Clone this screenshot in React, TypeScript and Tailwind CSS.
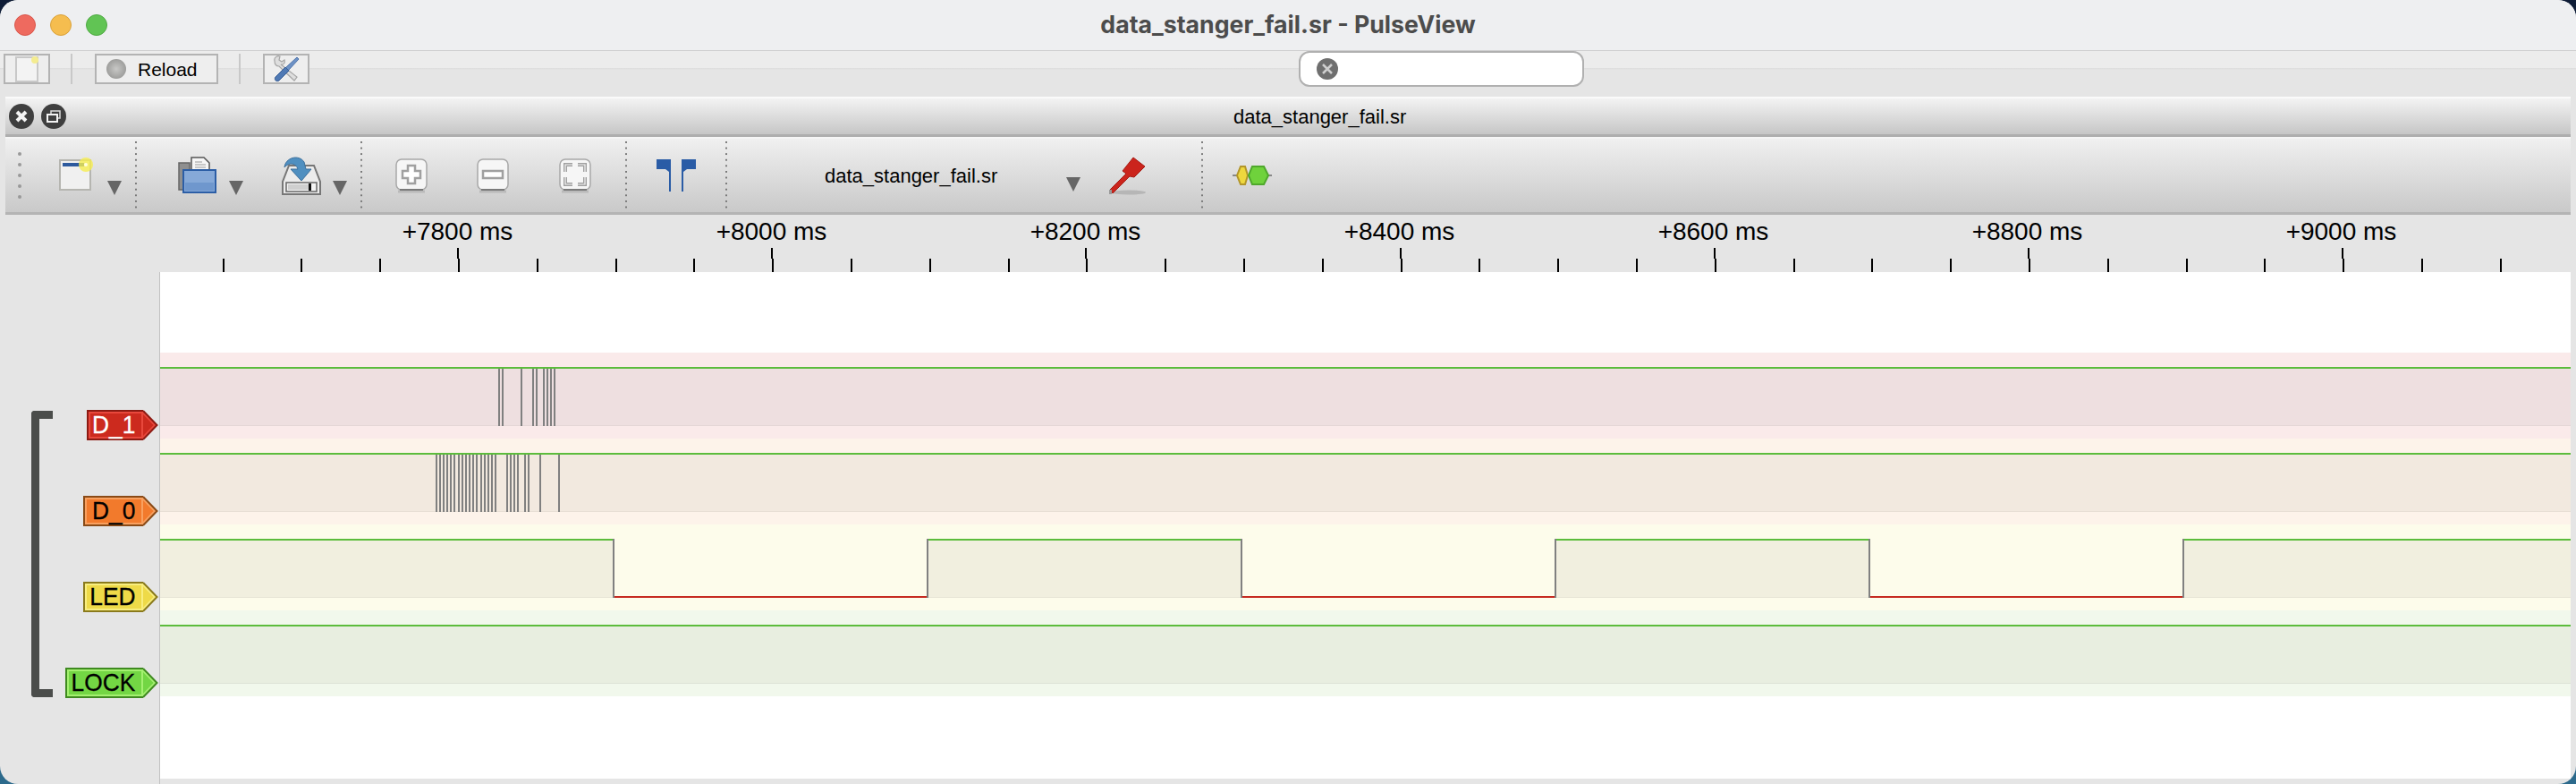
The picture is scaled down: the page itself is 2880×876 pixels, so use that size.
const FONT = "font-['Liberation_Sans',Arial,sans-serif]";

const Sep = () => (
  <div className="w-[2px] self-stretch my-[3px] bg-[linear-gradient(#777_2px,transparent_2px)] bg-[length:2px_6.6px]" />
);

const Tri = ({ className }: { className: string }) => (
  <svg width="16" height="16" viewBox="0 0 16 16" className={className}>
    <path d="M0 0H16L8 16Z" fill="#666" />
  </svg>
);

function CloseDot() {
  return (
    <svg width="28" height="28" viewBox="0 0 28 28">
      <circle cx="14" cy="14" r="14" fill="#3f3f3f" />
      <path d="M9 9L19 19M19 9L9 19" stroke="#f4f4f4" strokeWidth="4" />
    </svg>
  );
}

function FloatDot() {
  return (
    <svg width="28" height="28" viewBox="0 0 28 28">
      <circle cx="14" cy="14" r="14" fill="#3f3f3f" />
      <rect x="11" y="8" width="10" height="8" fill="none" stroke="#ddd" strokeWidth="1.5" />
      <rect x="7" y="12" width="11" height="8" fill="#3f3f3f" stroke="#f4f4f4" strokeWidth="2" />
    </svg>
  );
}

function NewIcon() {
  return (
    <svg width="42" height="42" viewBox="0 0 42 42">
      <rect x="3" y="4" width="34" height="33" fill="#f0f0f0" stroke="#b5b5b0" strokeWidth="2" />
      <rect x="6" y="7" width="24" height="4" fill="#2d5a9e" />
      <circle cx="32" cy="9" r="8" fill="#f6ee50" opacity="0.8" />
      <circle cx="32" cy="9" r="2" fill="#fffde0" />
    </svg>
  );
}

function FolderIcon() {
  return (
    <svg width="44" height="44" viewBox="0 0 44 44">
      <path d="M2 8H14V38H2Z" fill="#8f8f8f" stroke="#666" strokeWidth="1.5" />
      <path d="M16 2H30L36 8V18H16Z" fill="#f6f6f6" stroke="#555" strokeWidth="1.5" />
      <path d="M20 7H28M20 10H32M20 13H32" stroke="#999" strokeWidth="1.2" />
      <rect x="7" y="16" width="36" height="25" fill="#86a9d8" stroke="#2c5ea6" strokeWidth="2" />
      <rect x="9" y="30" width="32" height="9" fill="#6f97cd" />
    </svg>
  );
}

function SaveIcon() {
  return (
    <svg width="46" height="46" viewBox="0 0 46 46">
      <path d="M9 12H37L44 30V44H2V30Z" fill="#ececec" stroke="#777" strokeWidth="2" />
      <rect x="6" y="31" width="34" height="10" fill="#f4f4f4" stroke="#666" strokeWidth="1.5" />
      <rect x="8" y="33" width="24" height="6" fill="#cfcfcf" />
      <rect x="31" y="32" width="3" height="8" fill="#111" />
      <path d="M4 14C5 3 20 -1 26 8L28 16H34L23 29L11 16H19C17 9 9 8 4 14Z" fill="#4f8fc0" stroke="#3b6f9c" strokeWidth="1" />
    </svg>
  );
}

function ZoomBox({ children }: { children: React.ReactNode }) {
  return (
    <svg width="38" height="40" viewBox="0 0 38 40">
      <path d="M4 38H34" stroke="#000" strokeOpacity="0.12" strokeWidth="3" />
      <rect x="2" y="2" width="34" height="34" rx="6" fill="#f6f6f6" stroke="#a8a8a8" strokeWidth="1.5" />
      <path d="M6 36H32" stroke="#666" strokeWidth="1.5" />
      {children}
    </svg>
  );
}

function CursorsIcon() {
  return (
    <svg width="44" height="36" viewBox="0 0 44 36">
      <path d="M0 0H16V36H14V14L10 11H0Z" fill="#2a5ca6" />
      <path d="M44 0H28V36H30V14L34 11H44Z" fill="#2a5ca6" />
    </svg>
  );
}

function ProbeIcon() {
  return (
    <svg width="44" height="44" viewBox="0 0 44 44">
      <ellipse cx="24" cy="41" rx="19" ry="2.5" fill="#aaa" opacity="0.7" />
      <path d="M3 38L21 20L17 17L29 2L42 12L30 24L25 23L6 42Z" fill="#cb241c" stroke="#a51c15" strokeWidth="1" />
      <rect x="2" y="38" width="3" height="5" fill="#999" />
    </svg>
  );
}

function DecoderIcon() {
  return (
    <svg width="44" height="22" viewBox="0 0 44 22">
      <path d="M0 11H44" stroke="#888" strokeWidth="2" />
      <path d="M5 11L9 1H14L17 11L14 21H9Z" fill="#eed83e" stroke="#b2962a" strokeWidth="2" />
      <path d="M18 11L22 1H35L40 11L35 21H22Z" fill="#6fd23c" stroke="#4fa82c" strokeWidth="2" />
    </svg>
  );
}

function Toolbar() {
  return (
    <div className="flex items-center h-[87px] mx-[6px] bg-[linear-gradient(#f0f0f0,#c9c9c9)] border-t-2 border-t-[#f6f6f6] border-b-[3px] border-b-[#b4b4b4]">
      <div className="flex flex-col gap-[8px] ml-[14px] w-[4px]">
        {[0, 1, 2, 3, 4].map((i) => (
          <div key={i} className="w-[4px] h-[4px] rounded-full bg-[#999]" />
        ))}
      </div>
      <div className="ml-[40px]"><NewIcon /></div>
      <Tri className="ml-[14px] mt-[27px]" />
      <div className="ml-[15px] flex self-stretch"><Sep /></div>
      <div className="ml-[45px]"><FolderIcon /></div>
      <Tri className="ml-[14px] mt-[27px]" />
      <div className="ml-[42px]"><SaveIcon /></div>
      <Tri className="ml-[12px] mt-[27px]" />
      <div className="ml-[15px] flex self-stretch"><Sep /></div>
      <div className="ml-[36px]">
        <ZoomBox>
          <path d="M15 9H23V15H29V23H23V29H15V23H9V15H15Z" fill="#fff" stroke="#a0a0a0" strokeWidth="2.5" />
        </ZoomBox>
      </div>
      <div className="ml-[53px]">
        <ZoomBox>
          <rect x="8" y="15" width="22" height="8" fill="#fff" stroke="#a0a0a0" strokeWidth="2.5" />
        </ZoomBox>
      </div>
      <div className="ml-[54px]">
        <ZoomBox>
          <path d="M16 8H8V16M22 8H30V16M8 22V30H16M30 22V30H22" fill="none" stroke="#a0a0a0" strokeWidth="4" />
          <path d="M16 8H8V16M22 8H30V16M8 22V30H16M30 22V30H22" fill="none" stroke="#f4f4f4" strokeWidth="1.2" />
        </ZoomBox>
      </div>
      <div className="ml-[37px] flex self-stretch"><Sep /></div>
      <div className="ml-[33px]"><CursorsIcon /></div>
      <div className="ml-[33px] flex self-stretch"><Sep /></div>
      <span className="ml-[109px] w-[191px] text-[22px] text-black whitespace-nowrap">data_stanger_fail.sr</span>
      <Tri className="ml-[79px] mt-[19px]" />
      <div className="ml-[30px]"><ProbeIcon /></div>
      <div className="ml-[61px] flex self-stretch"><Sep /></div>
      <div className="ml-[33px]"><DecoderIcon /></div>
    </div>
  );
}

function TopBar() {
  return (
    <div className="flex items-start h-[51px] bg-[linear-gradient(#ececec_19px,#dcdcdc_19px,#e5e5e5_21px)]">
      <button className="flex items-center justify-center ml-[4px] mt-[3px] w-[52px] h-[34px] border-[2.5px] border-[#b3b3b3] bg-[#eeeeee]">
        <svg width="30" height="30" viewBox="0 0 30 30">
          <rect x="3" y="2" width="24" height="27" fill="#f3f3f3" stroke="#c8c8c8" strokeWidth="2" />
          <circle cx="24" cy="5" r="4" fill="#f4ec90" />
        </svg>
      </button>
      <div className="ml-[23px] mt-[3px] w-[2px] h-[34px] bg-[#c8c8c8]" />
      <button className="flex items-center ml-[25px] mt-[3px] w-[138px] h-[34px] border-[2.5px] border-[#b3b3b3] bg-[#eeeeee]">
        <div className="ml-[11px] w-[22px] h-[22px] rounded-full bg-[radial-gradient(#c8c8c6,#8c8c8a)]" />
        <span className="ml-[13px] text-[21px] leading-none text-black">Reload</span>
      </button>
      <div className="ml-[23px] mt-[3px] w-[2px] h-[34px] bg-[#c8c8c8]" />
      <button className="flex items-center justify-center ml-[25px] mt-[3px] w-[52px] h-[34px] border-[2.5px] border-[#b3b3b3] bg-[#eeeeee]">
        <svg width="32" height="30" viewBox="0 0 32 30">
          <path d="M3 6C2 2 6 0 9 1L8 5L11 7L14 5C15 8 13 11 10 10L28 24L25 28L8 12C5 12 3 10 3 6Z" fill="#dedede" stroke="#a6a6a6" strokeWidth="1.2" />
          <path d="M28 2L30 4L18 17L15 14Z" fill="#6d92c6" stroke="#4a70a8" strokeWidth="1" />
          <path d="M15 13L19 17L8 28C5 30 2 27 4 24Z" fill="#4f79b4" stroke="#3a5f96" strokeWidth="1" />
        </svg>
      </button>
      <div className="flex items-center ml-[1106px] w-[319px] h-[40px] pl-[18px] rounded-[12px] bg-white border-2 border-[#b0b0b0]">
        <svg width="24" height="24" viewBox="0 0 24 24">
          <circle cx="12" cy="12" r="12" fill="#6f6f6f" />
          <path d="M7 7L17 17M17 7L7 17" stroke="#cfcfcf" strokeWidth="2.5" />
        </svg>
      </div>
    </div>
  );
}

const LABELS = ["+7800 ms", "+8000 ms", "+8200 ms", "+8400 ms", "+8600 ms", "+8800 ms", "+9000 ms"];

function Ruler() {
  const ticks = Array.from({ length: 30 }, (_, i) => Math.round(248.6 + i * 87.8));
  return (
    <div className="flex flex-col h-[64px] bg-[#e5e5e5]">
      <div className="flex h-[37px] pl-[336px] text-[28px] leading-[38px] text-black">
        {LABELS.map((l) => (
          <div key={l} className="w-[351px] text-center whitespace-nowrap">{l}</div>
        ))}
      </div>
      <svg width="2880" height="27" className="block">
        {ticks.map((x, i) =>
          i % 4 === 3 ? (
            <g key={x} fill="#000">
              <rect x={x - 1} y="0" width="2" height="12" />
              <rect x={x} y="12" width="2" height="15" />
            </g>
          ) : (
            <rect key={x} x={x} y="12" width="2" height="15" fill="#000" />
          )
        )}
      </svg>
    </div>
  );
}

// signal edges, in page x
const D1_EDGES = [558, 562, 583, 596, 600, 608, 612, 616, 620];
const D0_EDGES = [488, 492, 496, 500, 504, 508, 513, 517, 521, 525, 529, 533, 538, 542, 546, 550, 554, 567, 571, 575, 579, 587, 591, 604, 625];
const LED_EDGES = [686, 1037, 1388, 1739, 2090, 2441];
const VIEW_X = 179;
const VIEW_W = 2695;

function Trace({ band, fill, rule, edges, clock }: { band: string; fill: string; rule: string; edges: number[]; clock?: boolean }) {
  const xs = [VIEW_X, ...edges, VIEW_X + VIEW_W].map((x) => x - VIEW_X);
  return (
    <div className={`h-[96px] ${band}`}>
      <svg width={VIEW_W} height="96" className="block">
        {clock ? (
          <>
            {xs.slice(0, -1).map((x, i) =>
              i % 2 === 0 ? (
                <g key={x}>
                  <rect x={x} y="18" width={xs[i + 1] - x} height="64" fill={fill} />
                  <rect x={x} y="81" width={xs[i + 1] - x} height="1" fill={rule} />
                  <rect x={x} y="16" width={xs[i + 1] - x} height="2" fill="#5cbc3c" />
                </g>
              ) : (
                <rect key={x} x={x} y="80" width={xs[i + 1] - x} height="2" fill="#c62a20" />
              )
            )}
            {edges.map((x) => (
              <rect key={x} x={x - VIEW_X - 1} y="16" width="2" height="66" fill="#808080" />
            ))}
          </>
        ) : (
          <>
            <rect x="0" y="18" width={VIEW_W} height="64" fill={fill} />
            <rect x="0" y="81" width={VIEW_W} height="1" fill={rule} />
            <rect x="0" y="16" width={VIEW_W} height="2" fill="#5cbc3c" />
            {edges.map((x) => (
              <rect key={x} x={x - VIEW_X - 1} y="18" width="2" height="64" fill="#808080" />
            ))}
          </>
        )}
      </svg>
    </div>
  );
}

function Chip({ name, box, fillHex, edgeHex, lightHex, text }: { name: string; box: string; fillHex: string; edgeHex: string; lightHex: string; text: string }) {
  return (
    <div className="flex h-[96px] items-start pt-[64px]">
      <div className="flex h-[34px]">
        <div className={`flex items-center justify-end pr-[9px] h-[34px] border-y-2 border-l-2 ${box} ${text}`}>
          <span className="text-[28px] leading-none whitespace-nowrap origin-right scale-x-[0.94] [-webkit-text-stroke:0.3px_currentColor]">{name}</span>
        </div>
        <svg width="17" height="34" viewBox="0 0 17 34">
          <path d="M0 2L15 17L0 32Z" fill={fillHex} />
          <path d="M0 3.5L13 17L0 30.5" fill="none" stroke={lightHex} strokeWidth="2" />
          <path d="M0 1L15.5 17L0 33" fill="none" stroke={edgeHex} strokeWidth="2" />
        </svg>
      </div>
    </div>
  );
}

export default function App() {
  return (
    <div className={`h-[876px] bg-[linear-gradient(#0e1c36,#2c6a8c)] ${FONT}`}>
      <div className="flex flex-col h-[876px] rounded-[20px] overflow-hidden bg-[#e5e5e5]">
        <div className="flex items-center justify-center h-[57px] pb-[2px] bg-[#eeeff1] border-b border-[#cfcfcf] relative">
          <div className="absolute left-[16px] top-[16px] flex gap-[16px]">
            <div className="w-[24px] h-[24px] rounded-full bg-[#ee6a5f] border border-[#d8574c]" />
            <div className="w-[24px] h-[24px] rounded-full bg-[#f5bd4f] border border-[#d9a23c]" />
            <div className="w-[24px] h-[24px] rounded-full bg-[#61c454] border border-[#50a945]" />
          </div>
          <span className="font-['Inter',sans-serif] text-[26.7px] font-bold text-[#4c4c4c]">data_stanger_fail.sr - PulseView</span>
        </div>
        <TopBar />
        <div className="flex items-center gap-[8px] h-[45px] mx-[6px] px-[4px] relative bg-[linear-gradient(#f3f3f3,#c6c6c6)] border-t-2 border-t-[#fafafa] border-b-[3px] border-b-[#aeaeae]">
          <CloseDot />
          <FloatDot />
          <span className="absolute left-[1373px] text-[22px] text-black whitespace-nowrap">data_stanger_fail.sr</span>
        </div>
        <Toolbar />
        <Ruler />
        <div className="flex flex-1 min-h-0">
          <div className="flex w-[179px] border-r border-[#c2c2c2]">
            <div className="ml-[35px] mt-[155px] w-[24px] h-[320px] rounded-l-[4px] border-l-[9px] border-y-[9px] border-[#4b4d4b]" />
            <div className="flex flex-col flex-1 items-end pt-[90px] pr-[1px]">
              <Chip name="D_1" box="w-[63px] bg-[#cc2a1e] border-[#8c1a12] shadow-[inset_0_0_0_2px_#e8483c]" fillHex="#cc2a1e" edgeHex="#8c1a12" lightHex="#e8483c" text="text-white" />
              <Chip name="D_0" box="w-[67px] bg-[#f27a2c] border-[#8a4a16] shadow-[inset_0_0_0_2px_#f8a060]" fillHex="#f27a2c" edgeHex="#8a4a16" lightHex="#f8a060" text="text-black" />
              <Chip name="LED" box="w-[67px] bg-[#eeda48] border-[#8a7a1c] shadow-[inset_0_0_0_2px_#f8ee80]" fillHex="#eeda48" edgeHex="#8a7a1c" lightHex="#f8ee80" text="text-black" />
              <Chip name="LOCK" box="w-[87px] bg-[#73d644] border-[#3f8a20] shadow-[inset_0_0_0_2px_#a4f070]" fillHex="#73d644" edgeHex="#3f8a20" lightHex="#a4f070" text="text-black" />
            </div>
          </div>
          <div className="w-[2695px] h-[566px] pt-[90px] bg-white">
            <Trace band="bg-[#faeaea]" fill="#eedfe0" rule="#e4d6d6" edges={D1_EDGES} />
            <Trace band="bg-[#fdf3ea]" fill="#f2e9df" rule="#e8dfd5" edges={D0_EDGES} />
            <Trace band="bg-[#fdfceb]" fill="#f1efdf" rule="#e6e4d5" edges={LED_EDGES} clock />
            <Trace band="bg-[#f1f8ec]" fill="#e8eee0" rule="#dde3d6" edges={[]} />
          </div>
        </div>
      </div>
    </div>
  );
}
